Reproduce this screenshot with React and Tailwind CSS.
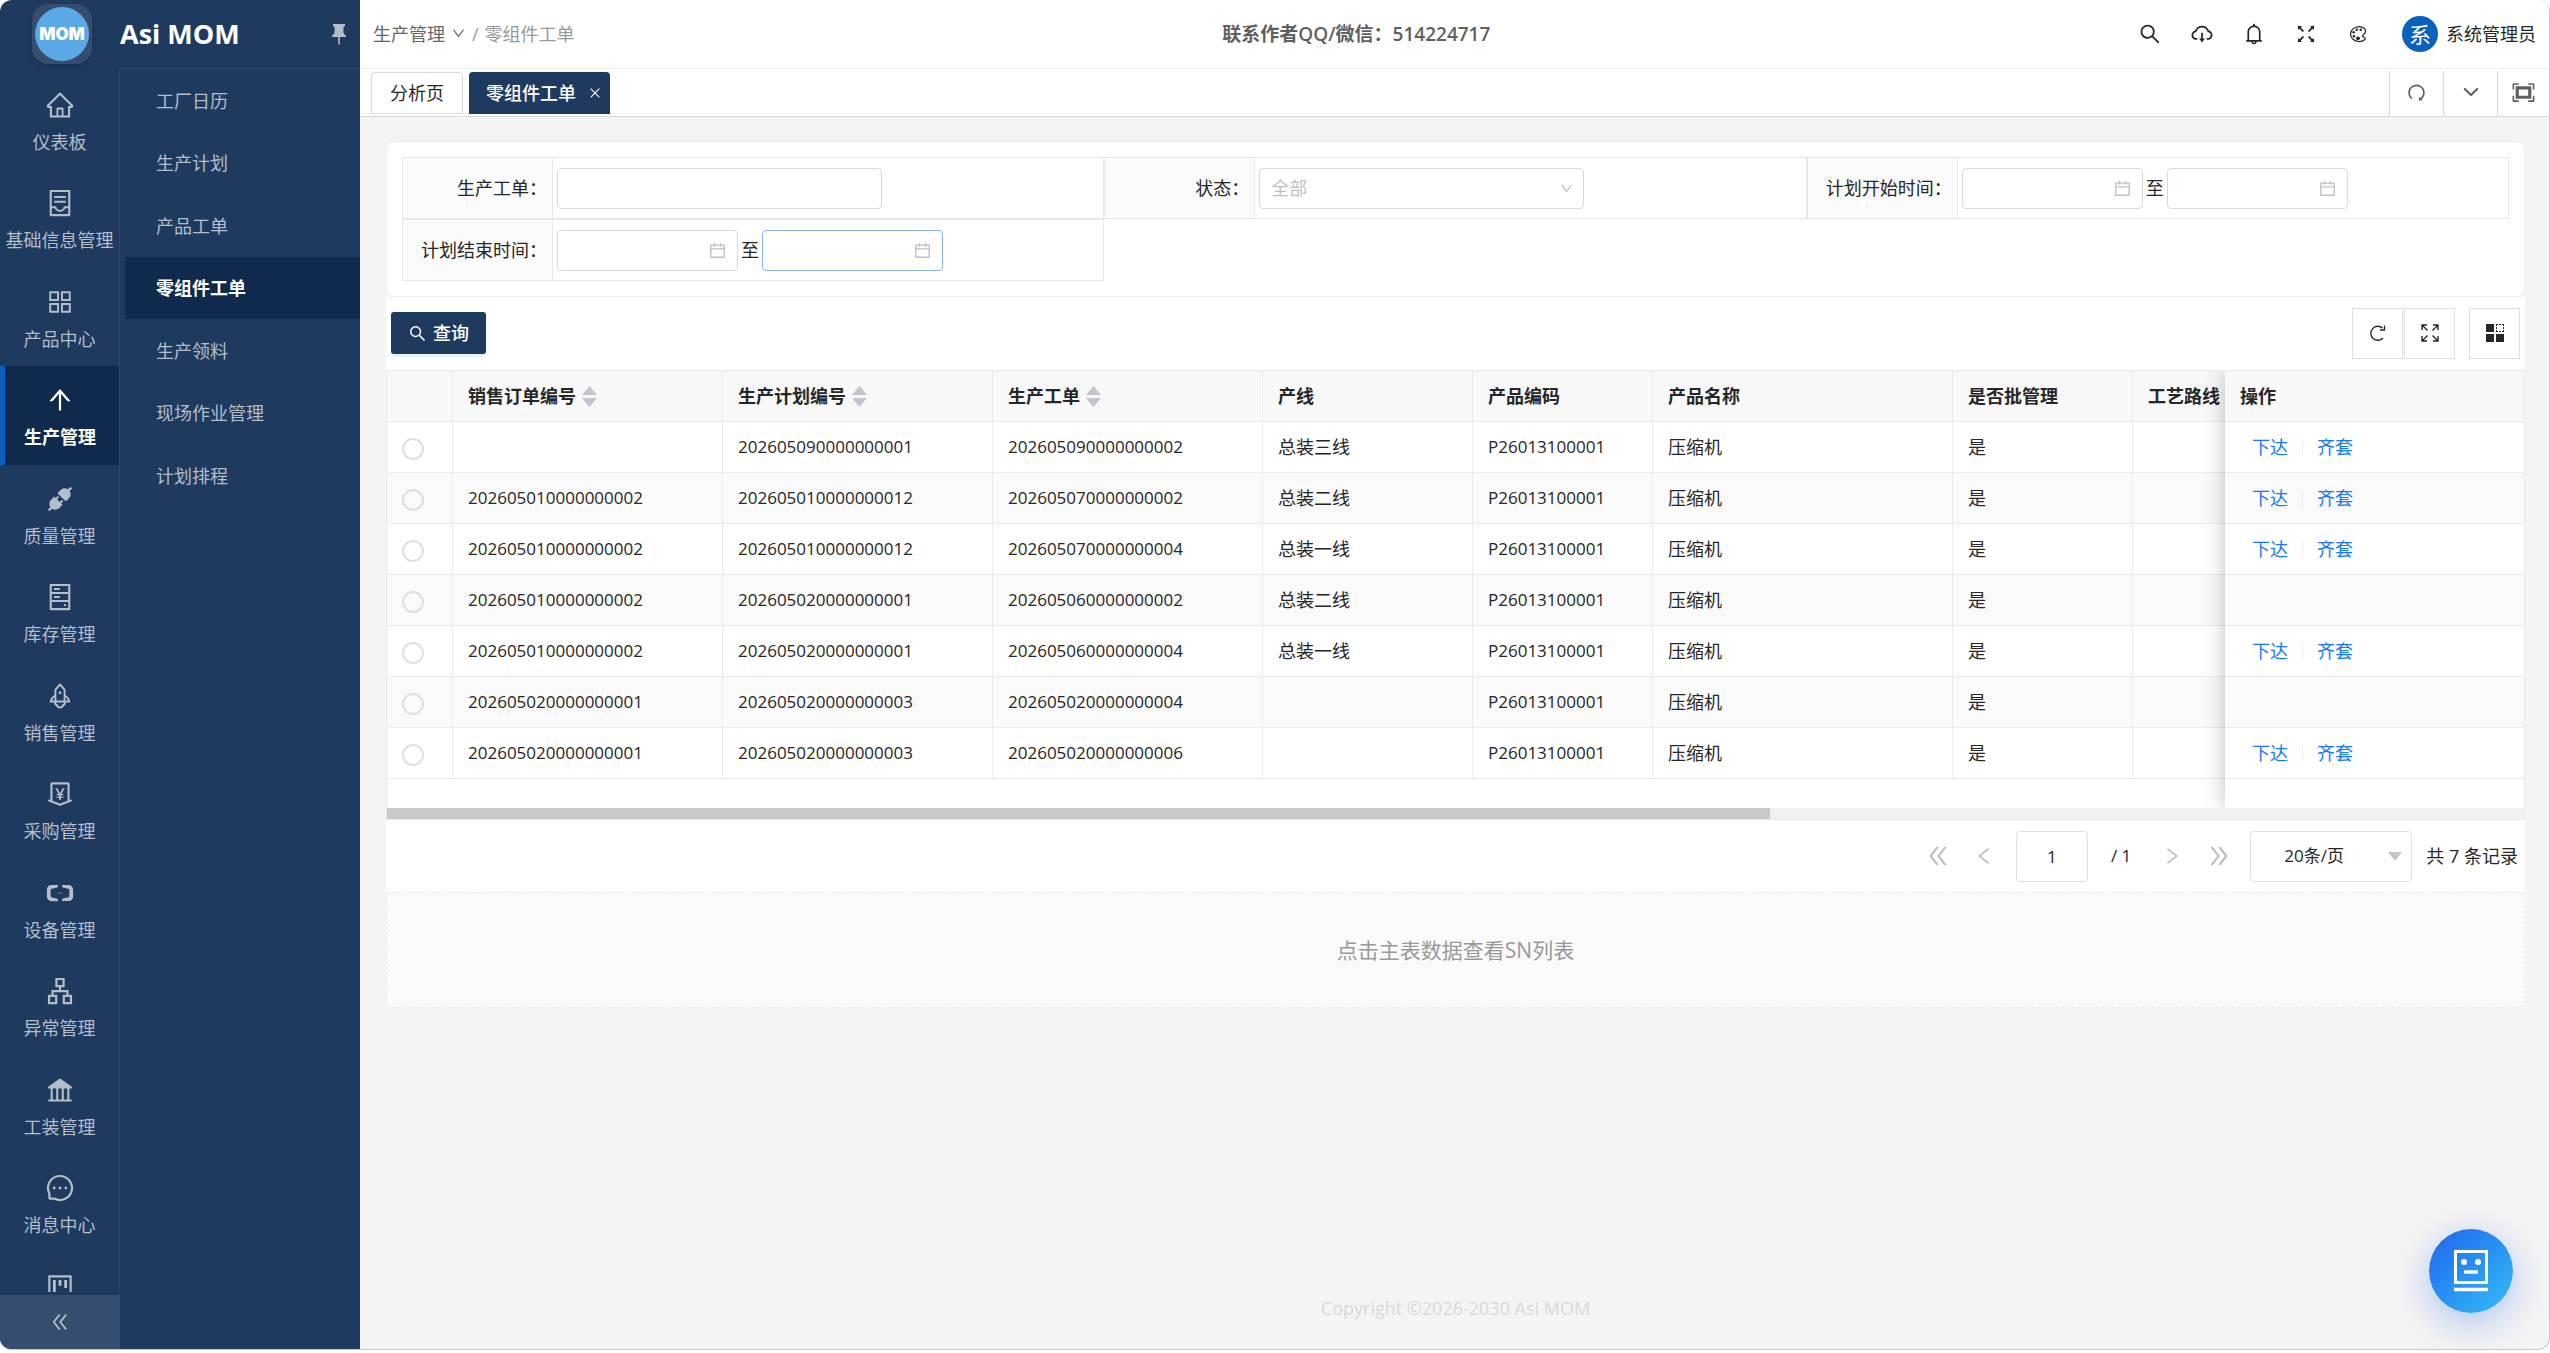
import React, { useState } from "react";
import {
  AiOutlineHome,
  AiOutlineContainer,
  AiOutlineAppstore,
  AiOutlineArrowUp,
  AiFillApi,
  AiOutlineHdd,
  AiOutlineRocket,
  AiOutlineMoneyCollect,
  AiOutlineAliyun,
  AiOutlineApartment,
  AiFillBank,
  AiOutlineMessage,
  AiOutlineProject,
  AiOutlineDoubleLeft,
  AiOutlineDoubleRight,
  AiOutlineLeft,
  AiOutlineRight,
  AiOutlineDown,
  AiOutlineSearch,
  AiOutlineCloudDownload,
  AiOutlineBell,
  AiOutlineFullscreen,
  AiOutlineRedo,
  AiOutlineCalendar,
  AiOutlineClose,
} from "react-icons/ai";
import { IoColorPaletteOutline, IoChevronDown } from "react-icons/io5";
import { VscScreenFull } from "react-icons/vsc";

const modules = [
  { name: "仪表板", icon: AiOutlineHome },
  { name: "基础信息管理", icon: AiOutlineContainer },
  { name: "产品中心", icon: AiOutlineAppstore },
  { name: "生产管理", icon: AiOutlineArrowUp },
  { name: "质量管理", icon: AiFillApi },
  { name: "库存管理", icon: AiOutlineHdd },
  { name: "销售管理", icon: AiOutlineRocket },
  { name: "采购管理", icon: AiOutlineMoneyCollect },
  { name: "设备管理", icon: AiOutlineAliyun },
  { name: "异常管理", icon: AiOutlineApartment },
  { name: "工装管理", icon: AiFillBank },
  { name: "消息中心", icon: AiOutlineMessage },
  { name: "", icon: AiOutlineProject },
];

const subMenus = [
  "工厂日历",
  "生产计划",
  "产品工单",
  "零组件工单",
  "生产领料",
  "现场作业管理",
  "计划排程",
];

const headerActions = [
  { label: "搜索", icon: AiOutlineSearch },
  { label: "下载", icon: AiOutlineCloudDownload },
  { label: "通知", icon: AiOutlineBell },
  { label: "全屏", icon: AiOutlineFullscreen },
  { label: "主题", icon: IoColorPaletteOutline, size: 20 },
];

const columns = [
  { key: "sale", title: "销售订单编号", width: "w-[270px]", sortable: true },
  { key: "plan", title: "生产计划编号", width: "w-[270px]", sortable: true },
  { key: "order", title: "生产工单", width: "w-[270px]", sortable: true },
  { key: "line", title: "产线", width: "w-[210px]", cjk: true },
  { key: "code", title: "产品编码", width: "w-[180px]" },
  { key: "product", title: "产品名称", width: "w-[300px]", cjk: true },
  { key: "batch", title: "是否批管理", width: "w-[180px]", cjk: true },
  { key: "route", title: "工艺路线", width: "", cjk: true },
];

const base = { code: "P26013100001", product: "压缩机", batch: "是", route: "" };

const rows = [
  { ...base, sale: "", plan: "202605090000000001", order: "202605090000000002", line: "总装三线", actions: true },
  { ...base, sale: "202605010000000002", plan: "202605010000000012", order: "202605070000000002", line: "总装二线", actions: true },
  { ...base, sale: "202605010000000002", plan: "202605010000000012", order: "202605070000000004", line: "总装一线", actions: true },
  { ...base, sale: "202605010000000002", plan: "202605020000000001", order: "202605060000000002", line: "总装二线", actions: false },
  { ...base, sale: "202605010000000002", plan: "202605020000000001", order: "202605060000000004", line: "总装一线", actions: true },
  { ...base, sale: "202605020000000001", plan: "202605020000000003", order: "202605020000000004", line: "", actions: false },
  { ...base, sale: "202605020000000001", plan: "202605020000000003", order: "202605020000000006", line: "", actions: true },
];

export default function App() {
  return (
    <div className="h-screen bg-white pb-[3px] font-['Open_Sans','Noto_Sans_CJK_SC',sans-serif] text-lg leading-[26px] text-[#262626]">
      <div className="flex h-full overflow-hidden rounded-xl border-r border-b border-[#c8c8c8] bg-[#f4f4f4]">
        <Sidebar />
        <div className="flex min-w-0 flex-1 flex-col">
          <Header />
          <TabBar />
          <main className="flex min-h-0 flex-1 flex-col pt-6 pr-6 pl-[26px]">
            <SearchForm />
            <div className="bg-white">
              <Toolbar />
              <OrderTable />
              <Pager />
            </div>
            <section className="flex h-[116px] shrink-0 items-center justify-center rounded-md border border-dashed border-[#e8e8e8] bg-[#fafafa] text-[21px] text-[#999]">
              点击主表数据查看SN列表
            </section>
            <footer className="mt-auto pb-7 text-center text-[#d9d9d9]">
              Copyright ©2026-2030 Asi MOM
            </footer>
          </main>
        </div>
      </div>
      <button
        aria-label="智能助手"
        className="fixed right-[37px] bottom-10 flex h-[84px] w-[84px] items-center justify-center rounded-full bg-linear-135 from-[#2563eb] to-[#38bdf8] shadow-[0_10px_38px_rgba(37,99,235,0.35)]"
      >
        <svg width="34" height="42" viewBox="0 0 34 42" fill="none" stroke="#fff">
          <rect x="1.5" y="1.5" width="31" height="31" strokeWidth="3" />
          <circle cx="10" cy="12" r="3" fill="#fff" stroke="none" />
          <circle cx="24" cy="12" r="3" fill="#fff" stroke="none" />
          <path d="M10 22h14" strokeWidth="3.4" />
          <path d="M0 39.5h34" strokeWidth="3.6" />
        </svg>
      </button>
    </div>
  );
}

function Sidebar() {
  return (
    <aside className="flex w-[360px] shrink-0 flex-col bg-[#1e3a5f] text-[#b4bdca]">
      <div className="flex h-[68px] shrink-0 items-center pr-[13px] pl-8">
        <div className="flex h-[60px] w-[60px] items-center justify-center rounded-2xl bg-[#374d6e] shadow-md">
          <div className="flex h-[54px] w-[54px] items-center justify-center rounded-full bg-[#5ba8e6] font-['Inter',sans-serif] text-[17px] font-black text-white">
            MOM
          </div>
        </div>
        <h1 className="ml-7 flex-1 text-[27px] font-bold text-white">Asi MOM</h1>
        <button aria-label="固定菜单">
          <svg width="16" height="22" viewBox="0 0 16 22" fill="currentColor">
            <path d="M2 1h12v2l-1.500 1v6l2.500 3v1H1v-1l2.500-3V4L2 3z" />
            <path d="M7.200 14h1.600v7.500H7.200z" />
          </svg>
        </button>
      </div>
      <div className="flex min-h-0 flex-1">
        <div className="flex w-[120px] shrink-0 flex-col">
          <nav className="min-h-0 flex-1 overflow-hidden border-r border-[#2e486b] pt-[3px]">
            {modules.map(({ name, icon: Icon }, i) => (
              <a
                key={i}
                href="#"
                className={`flex h-[98px] flex-col items-center gap-[9px] pt-[19px] even:h-[99px] ${
                  name === "生产管理"
                    ? "border-l-5 border-[#0960bd] bg-[#0f2a4d] pr-[4px] font-bold text-white"
                    : ""
                }`}
              >
                <Icon size={30} />
                <span className="whitespace-nowrap">{name}</span>
              </a>
            ))}
          </nav>
          <button
            aria-label="收起菜单"
            className="mt-[3px] flex h-[54px] shrink-0 items-center justify-center bg-[#354d6e]"
          >
            <AiOutlineDoubleLeft size={22} />
          </button>
        </div>
        <nav className="flex-1 border-t border-[#2e486b] pl-[5px]">
          {subMenus.map((name) => (
            <a
              key={name}
              href="#"
              className={`flex h-[63px] items-center pl-[31px] even:h-[62px] ${
                name === "零组件工单" ? "bg-[#0f2a4d] font-bold text-white" : ""
              }`}
            >
              {name}
            </a>
          ))}
        </nav>
      </div>
    </aside>
  );
}

function Header() {
  return (
    <header className="flex h-[69px] shrink-0 items-center border-b border-[#eee] bg-white pr-[13px] pb-px pl-[13px]">
      <nav className="flex items-center text-[#999]">
        <a href="#" className="flex items-center gap-[6px] text-[#666]">
          生产管理
          <AiOutlineDown size={15} />
        </a>
        <span className="mx-[6px]">/</span>
        <span>零组件工单</span>
      </nav>
      <p className="flex-1 text-center text-[19px] font-semibold text-[#5f5f5f]">
        联系作者QQ/微信：514224717
      </p>
      <div className="flex items-center gap-7 pr-8">
        {headerActions.map(({ label, icon: Icon, size = 24 }) => (
          <button key={label} aria-label={label} className="flex w-6 justify-center">
            <Icon size={size} />
          </button>
        ))}
      </div>
      <button className="flex items-center gap-2">
        <span className="flex h-9 w-9 items-center justify-center rounded-full bg-[#0960bd] text-[22px] text-white">
          系
        </span>
        系统管理员
      </button>
    </header>
  );
}

function TabBar() {
  const tool = "flex items-center justify-center border-l border-[#d9d9d9] pb-[3px]";
  return (
    <div className="flex h-12 shrink-0 border-b border-[#d9d9d9] bg-white">
      <div className="mb-[2px] flex flex-1 items-end gap-[6px] border-b border-[#f0f0f0] pl-[11px]">
        <button className="-mb-px h-[42px] rounded-t-sm border border-[#d9d9d9] bg-white px-[18px]">
          分析页
        </button>
        <div className="-mb-px flex h-[42px] items-center rounded-t-sm bg-[#1e3a5f] pr-2 pl-[17px] text-white">
          <button className="font-medium">零组件工单</button>
          <button aria-label="关闭" className="ml-3">
            <AiOutlineClose size={14} />
          </button>
        </div>
      </div>
      <div className="flex pt-[2px] text-[#5f5f5f]">
        <button aria-label="刷新" className={`${tool} w-[54px]`}>
          <AiOutlineRedo size={21} />
        </button>
        <button aria-label="更多" className={`${tool} w-[54px]`}>
          <IoChevronDown size={22} />
        </button>
        <button aria-label="内容全屏" className={`${tool} w-[52px]`}>
          <VscScreenFull size={25} />
        </button>
      </div>
    </div>
  );
}

function Field({ label, htmlFor, children }) {
  return (
    <div className="flex h-[62px] border border-[#e8e8e8]">
      <label
        htmlFor={htmlFor}
        className="flex w-[150px] shrink-0 items-center justify-end border-r border-[#e8e8e8] bg-[#fafafa] pr-[5px]"
      >
        {label}：
      </label>
      <div className="flex items-center gap-[3px] pl-1">{children}</div>
    </div>
  );
}

function DateInput({ id, label, active }) {
  return (
    <span
      className={`flex h-[41px] w-[181px] items-center rounded-sm border pr-[10px] ${
        active ? "border-[#8ab4e8]" : "border-[#d9d9d9]"
      }`}
    >
      <input id={id} aria-label={label} className="w-0 flex-1 pl-3 outline-none" />
      <AiOutlineCalendar size={19} className="text-[#bfbfbf]" />
    </span>
  );
}

function SearchForm() {
  return (
    <form className="h-[156px] shrink-0 rounded-lg border border-[#eee] bg-white px-[15px] pt-[15px]">
      <div className="grid grid-cols-3">
        <Field label="生产工单" htmlFor="order">
          <input id="order" className="h-[41px] w-[325px] rounded-sm border border-[#d9d9d9] px-3 outline-none" />
        </Field>
        <Field label="状态" htmlFor="status">
          <span className="relative flex items-center">
            <select
              id="status"
              className="h-[41px] w-[325px] appearance-none rounded-sm border border-[#d9d9d9] bg-white px-[11px] text-[#bfbfbf]"
            >
              <option>全部</option>
            </select>
            <AiOutlineDown size={15} className="pointer-events-none absolute right-[10px] text-[#bfbfbf]" />
          </span>
        </Field>
        <Field label="计划开始时间" htmlFor="start-from">
          <DateInput id="start-from" label="计划开始时间起" />
          至
          <DateInput id="start-to" label="计划开始时间止" />
        </Field>
        <Field label="计划结束时间" htmlFor="end-from">
          <DateInput id="end-from" label="计划结束时间起" />
          至
          <DateInput id="end-to" label="计划结束时间止" active />
        </Field>
      </div>
    </form>
  );
}

function Toolbar() {
  const box = "flex h-[51px] w-[51px] items-center justify-center border border-[#dcdfe6]";
  return (
    <div className="flex h-[73px] items-center justify-between pr-[5px] pb-px pl-[5px]">
      <button className="flex h-[42px] w-[95px] items-center justify-center gap-[6px] rounded-[3px] bg-[#1e3a5f] font-medium text-white shadow-[0_3px_0_#e6f4ff]">
        <AiOutlineSearch size={19} />
        查询
      </button>
      <div className="flex gap-px">
        <button aria-label="刷新表格" className={box}>
          <svg width="18" height="18" viewBox="0 0 18 18" fill="none" stroke="currentColor" strokeWidth="1.300">
            <path d="M14 14A7 7 0 1 1 13.500 4" />
            <path d="M15.500 1.500v4.500h-4.500" />
          </svg>
        </button>
        <button aria-label="表格全屏" className={box}>
          <svg width="20" height="20" viewBox="0 0 20 20" fill="none" stroke="currentColor" strokeWidth="1.400">
            <path d="M2 7V2h5M2 2l5.500 5.500M13 2h5v5M18 2l-5.500 5.500M2 13v5h5M2 18l5.500-5.500M18 13v5h-5M18 18l-5.500-5.500" />
          </svg>
        </button>
        <button aria-label="自定义列" className={`${box} ml-[13px]`}>
          <svg width="18" height="18" viewBox="0 0 18 18" fill="currentColor">
            <path d="M0 0h8v8H0zM0 10h8v8H0zM10 10h8v8h-8z" />
            <path
              d="M10 0h2v1h-1v1h-1zM13 0h2v1h-2zM16 0h2v2h-1V1h-1zM10 3h1v2h-1zM17 3h1v2h-1zM10 6h1v1h1v1h-2zM13 7h2v1h-2zM17 6h1v2h-2V7h1z"
            />
          </svg>
        </button>
      </div>
    </div>
  );
}

function SortIcon() {
  return (
    <svg width="15" height="21" viewBox="0 0 15 21" fill="#c0c4cc">
      <path d="M7.500 0L15 9H0z" />
      <path d="M7.500 21L0 12h15z" />
    </svg>
  );
}

function OrderTable() {
  const [selected, setSelected] = useState(null);
  const th = "h-[51px] border-r border-b border-[#e8eaec] px-[15px] text-left font-bold whitespace-nowrap";
  const td = "h-[51px] border-r border-b border-[#e8eaec] px-[15px] whitespace-nowrap";

  return (
    <div className="border border-[#e8eaec]">
      <div className="flex overflow-hidden">
        <div className="min-w-0 flex-1 overflow-hidden pb-[29px]">
          <table className="w-[3000px] table-fixed border-separate border-spacing-0">
            <thead className="bg-[#f8f8f9]">
              <tr>
                <th className={`${th} w-[66px]`} />
                {columns.map((c) => (
                  <th key={c.key} className={`${th} ${c.width}`}>
                    <span className="flex items-center gap-[6px]">
                      {c.title}
                      {c.sortable && <SortIcon />}
                    </span>
                  </th>
                ))}
              </tr>
            </thead>
            <tbody>
              {rows.map((row, i) => (
                <tr key={row.order} className="even:bg-[#fafafa]">
                  <td className={td}>
                    <input
                      type="radio"
                      name="order"
                      aria-label={row.order}
                      checked={selected === i}
                      onChange={() => setSelected(i)}
                      className="mt-1 block h-[22px] w-[22px] appearance-none rounded-full border-2 border-[#dcdfe6] checked:border-[#0960bd]"
                    />
                  </td>
                  {columns.map((c) => (
                    <td key={c.key} className={`${td} ${c.cjk ? "text-lg" : "text-[17px]"}`}>
                      {row[c.key]}
                    </td>
                  ))}
                </tr>
              ))}
            </tbody>
          </table>
        </div>
        {/* fixed action column */}
        <div className="z-10 w-[299px] shrink-0 bg-white shadow-[0_0_20px_rgba(0,0,0,0.25)]">
          <table className="w-full table-fixed border-separate border-spacing-0">
            <thead className="bg-[#f8f8f9]">
              <tr>
                <th className="h-[51px] border-b border-[#e8eaec] px-[15px] text-left font-bold">操作</th>
              </tr>
            </thead>
            <tbody>
              {rows.map((row) => (
                <tr key={row.order} className="even:bg-[#fafafa]">
                  <td className="h-[51px] border-b border-[#e8eaec] px-[27px] text-[#1677ff]">
                    {row.actions && (
                      <div className="flex items-center gap-[14px]">
                        <button>下达</button>
                        <span className="h-4 w-px bg-[#eee]" />
                        <button>齐套</button>
                      </div>
                    )}
                  </td>
                </tr>
              ))}
            </tbody>
          </table>
        </div>
      </div>
      <div className="h-[11px] bg-[#f1f1f1]">
        <div className="h-full w-11/17 bg-[#c8c9cb]" />
      </div>
    </div>
  );
}

function Pager() {
  return (
    <div className="flex h-[72px] items-center justify-end pr-[7px]">
      <div className="flex items-center gap-[22px] text-[#b8bcc4]">
        <button aria-label="首页">
          <AiOutlineDoubleLeft size={26} />
        </button>
        <button aria-label="上一页">
          <AiOutlineLeft size={22} />
        </button>
      </div>
      <input
        aria-label="页码"
        defaultValue="1"
        className="ml-[21px] h-[51px] w-[72px] rounded-sm border border-[#dcdfe6] text-center text-[17px] text-[#262626] outline-none"
      />
      <span className="ml-[23px] text-[17px]">/ 1</span>
      <div className="ml-[30px] flex items-center gap-[23px] text-[#b8bcc4]">
        <button aria-label="下一页">
          <AiOutlineRight size={22} />
        </button>
        <button aria-label="末页">
          <AiOutlineDoubleRight size={26} />
        </button>
      </div>
      <span className="relative ml-[18px] flex items-center">
        <select
          aria-label="每页条数"
          className="h-[51px] w-[162px] appearance-none rounded-sm border border-[#dcdfe6] bg-white pl-[33px] text-[17px]"
        >
          <option>20条/页</option>
        </select>
        <svg width="14" height="9" viewBox="0 0 14 9" fill="#c0c4cc" className="pointer-events-none absolute right-[10px]">
          <path d="M0 0h14L7 9z" />
        </svg>
      </span>
      <span className="ml-[14px]">共 7 条记录</span>
    </div>
  );
}
